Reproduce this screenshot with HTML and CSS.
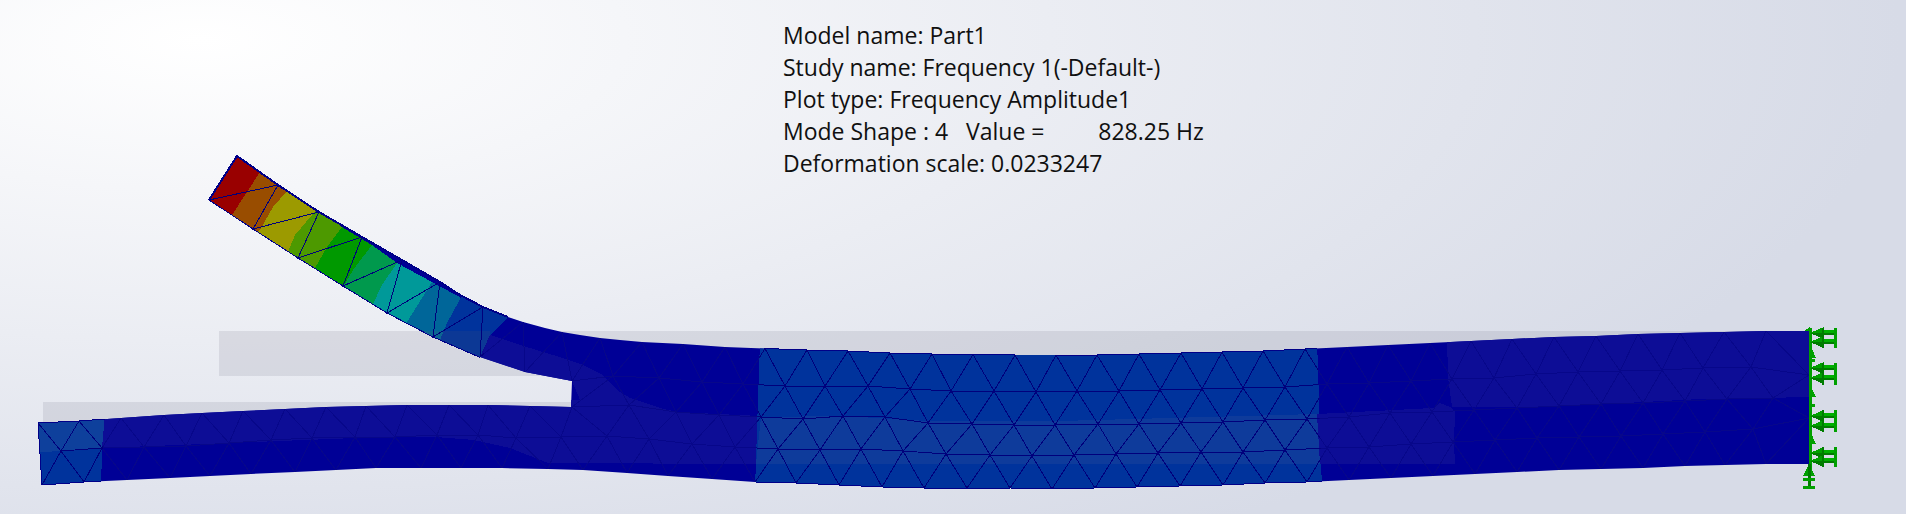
FILE: index.html
```html
<!DOCTYPE html>
<html lang="en">
<head>
<meta charset="utf-8">
<title>Frequency 1 - Mode Shape 4</title>
<link rel="stylesheet" href="styles.css">
</head>
<body>
<main class="viewport">
  <svg class="model" width="1906" height="514" viewBox="0 0 1906 514" aria-label="Deformed part, mode shape 4">
    <defs>
      <clipPath id="part">
        <path d="M237 156L278 185 319 212 362 237 402 260 440 282 460 295 483 307 508 317 523 322 545 328 562 332 580 335 600 338 620 340 642 342 683 344 725 347 765 348.5 807 350 848 351 890 353 932 354 973 354.5 1015 355 1056 355 1097 355 1139 354 1181 353 1222 352 1263 351 1305 349 1347 347 1388 345 1430 343 1471 341 1512 339 1554 337 1596 336 1638 334 1680 333 1724 332 1766 331 1809 331 1809 464 1766 464 1725 465 1685 466 1643 468 1601 469 1559 470 1517 472 1475 474 1433 476 1391 478 1349 480 1307 482 1265 483 1223 485 1180 486 1137 487 1095 488 1052 489 1010 488 967 488 924 488 882 487 839 485 796 483 755 482 712 479 668 476 627 473 583 470 548 469 502 468 461 468 421 468 376 468 336 470 295 472 251 474 210 476 170 478 127 480 84 482 42 485 38 423 79 421 121 418 164 415 202 413 243 411 285 409 326 407 366 406 407 405 449 405 488 405 530 406 571 407 572 381 525 372 480 357 440 340 387 313 343 286 298 258 253 229 209 200Z"/>
      </clipPath>
      <clipPath id="bright-zones">
        <rect x="30" y="410" width="73" height="80"/>
        <polygon points="190,140 515,310 490,335 480,365 190,240"/>
        <polygon points="760,340 1317,340 1322,495 755,495"/>
      </clipPath>
      <g id="fixture-arrow">
        <polygon class="fix-bright" points="1810,0 1824,-6 1824,0"/>
        <polygon class="fix-dark" points="1810,0 1824,0 1824,6"/>
        <rect class="fix-light" x="1824" y="-3" width="12" height="3"/>
        <rect class="fix-dark" x="1824" y="0" width="12" height="2"/>
      </g>
      <g id="mesh-lines">
        <polyline points="209,200 278,185 253,229 319,212 298,258 362,237 343,286 402,260 387,313 440,282 433,337 483,307 480,357 523,322 525,372 562,332 572,381 600,338 613,376"/>
        <polyline points="572,381 613,376 659,378 702,382 743,384 785,386 825,386 868,386 910,389 951,391 994,391 1036,392 1077,391 1119,391 1160,390 1202,389 1243,388 1285,387 1327,384 1369,383 1411,381 1452,379 1494,378 1536,374 1578,372 1620,371 1662,370 1703,368 1751,367 1809,375"/>
        <polyline points="572,407 629,405 676,412 719,415 761,417 803,419 843,416 885,417 928,423 972,424 1014,425 1055,425 1098,424 1139,424 1181,423 1223,422 1265,420 1307,419 1349,417 1390,413 1432,412 1474,410 1517,408 1559,406 1601,404 1643,403 1685,401 1727,399 1773,398 1809,418"/>
        <polyline points="61,451 102,448 144,447 186,446 229,443 271,440 312,438 355,437 395,437 437,435 478,435 516,438 561,437 607,436 649,439 692,444 735,447 778,449 820,450 861,449 903,451 946,454 990,455 1032,456 1074,455 1116,454 1158,453 1201,452 1243,452 1285,450 1327,448 1369,447 1411,444 1453,442 1495,440 1537,438 1579,437 1621,436 1663,434 1705,432 1753,429 1809,418"/>
        <polyline points="600,338 613,376 642,342 659,378 683,344 702,382 725,347 743,384 765,348.5 785,386 807,350 825,386 848,351 868,386 890,353 910,389 932,354 951,391 973,354.5 994,391 1015,355 1036,392 1056,355 1077,391 1097,355 1119,391 1139,354 1160,390 1181,353 1202,389 1222,352 1243,388 1263,351 1285,387 1305,349 1327,384 1347,347 1369,383 1388,345 1411,381 1430,343 1452,379 1471,341 1494,378 1512,339 1536,374 1554,337 1578,372 1596,336 1620,371 1638,334 1662,370 1680,333 1703,368 1724,332 1751,367 1766,331 1809,375"/>
        <polyline points="572,407 613,376 629,405 659,378 676,412 702,382 719,415 743,384 761,417 785,386 803,419 825,386 843,416 868,386 885,417 910,389 928,423 951,391 972,424 994,391 1014,425 1036,392 1055,425 1077,391 1098,424 1119,391 1139,424 1160,390 1181,423 1202,389 1223,422 1243,388 1265,420 1285,387 1307,419 1327,384 1349,417 1369,383 1390,413 1411,381 1432,412 1452,379 1474,410 1494,378 1517,408 1536,374 1559,406 1578,372 1601,404 1620,371 1643,403 1662,370 1685,401 1703,368 1727,399 1751,367 1773,398 1809,375"/>
        <polyline points="561,437 572,407 607,436 629,405 649,439 676,412 692,444 719,415 735,447 761,417 778,449 803,419 820,450 843,416 861,449 885,417 903,451 928,423 946,454 972,424 990,455 1014,425 1032,456 1055,425 1074,455 1098,424 1116,454 1139,424 1158,453 1181,423 1201,452 1223,422 1243,452 1265,420 1285,450 1307,419 1327,448 1349,417 1369,447 1390,413 1411,444 1432,412 1453,442 1474,410 1495,440 1517,408 1537,438 1559,406 1579,437 1601,404 1621,436 1643,403 1663,434 1685,401 1705,432 1727,399 1753,429 1773,398 1809,418"/>
        <polyline points="561,437 583,470 607,436 627,473 649,439 668,476 692,444 712,479 735,447 755,482 778,449 796,483 820,450 839,485 861,449 882,487 903,451 924,488 946,454 967,488 990,455 1010,488 1032,456 1052,489 1074,455 1095,488 1116,454 1137,487 1158,453 1180,486 1201,452 1223,485 1243,452 1265,483 1285,450 1307,482 1327,448 1349,480 1369,447 1391,478 1411,444 1433,476 1453,442 1475,474 1495,440 1517,472 1537,438 1559,470 1579,437 1601,469 1621,436 1643,468 1663,434 1685,466 1705,432 1725,465 1753,429 1766,464 1809,418"/>
        <polyline points="38,423 61,451 79,421 102,448 121,418 144,447 164,415 186,446 202,413 229,443 243,411 271,440 285,409 312,438 326,407 355,437 366,406 395,437 407,405 437,435 449,405 478,435 488,405 516,438 530,406 561,437 572,407"/>
        <polyline points="42,485 61,451 84,482 102,448 127,480 144,447 170,478 186,446 210,476 229,443 251,474 271,440 295,472 312,438 336,470 355,437 376,468 395,437 421,468 437,435 461,468 478,435 502,468 516,438 548,469 561,437 583,470"/>
      </g>
    </defs>

    <rect class="ghost" x="219" y="331" width="1590" height="45"/>
    <rect class="ghost" x="43" y="402" width="528" height="62"/>

    <g clip-path="url(#part)">
      <rect class="c-dark" x="0" y="100" width="1906" height="414"/>
      <polygon class="c-red" points="200,130 270,172 247,192 232,215 190,230"/>
      <polygon class="c-orange" points="260,172 288,190 273,207 260,230 265,250 215,230 232,215 247,192"/>
      <polygon class="c-yellow" points="288,190 318,208 295,235 288,252 290,275 245,240 260,230 273,207"/>
      <polygon class="c-olive" points="318,208 342,227 327,247 315,268 320,290 270,260 288,252 295,235"/>
      <polygon class="c-green" points="342,227 372,245 353,270 343,287 345,310 300,280 315,268 327,247"/>
      <polygon class="c-seagreen" points="372,245 397,263 382,285 373,304 375,330 330,300 343,287 353,270"/>
      <polygon class="c-teal" points="397,263 432,282 407,322 410,345 360,320 373,304 382,285"/>
      <polygon class="c-steel" points="432,282 465,300 447,323 440,340 445,360 395,340 407,322"/>
      <polygon class="c-mid" points="465,290 515,310 508,317 490,335 480,357 480,375 430,350 440,340 447,323"/>
      <rect class="overlay-arm" x="390" y="331" width="100" height="45"/>
      <polygon class="c-dark-lit" points="490,335 520,345 563,358 583,365 603,375 617,390 630,398 660,408 677,412 760,416 757,464 548,463 510,448 474,440 435,437 356,438 229,443 102,448 105,410 580,400 572,381 525,375 480,360"/>
      <polygon class="c-mid" points="760,340 1317,340 1322,490 755,490"/>
      <polygon class="c-mid-lit" points="761,417 843,416 927,421 1060,421 1317,414 1320,464 756,464"/>
      <polygon class="c-dark-lit" points="1317,414 1433,408 1440,403 1450,407 1455,412 1454,443 1455,464 1320,464"/>
      <polygon class="c-dark-lit" points="1447,335 1815,325 1815,397 1700,399 1550,407 1452,407 1448,377"/>
      <polygon class="c-tip-lit" points="30,415 105,415 102,448 30,453"/>
      <polygon class="c-mid" points="30,453 102,448 101,490 30,490"/>
    </g>

    <use class="mesh-faint" href="#mesh-lines"/>
    <g clip-path="url(#bright-zones)">
      <use class="mesh-strong" href="#mesh-lines"/>
    </g>

    <polyline class="edge-heavy" points="209,200 237,156 278,185 319,212 362,237 402,260 440,282 460,295 483,307 508,317"/>
    <polyline class="edge" points="209,200 253,229 298,258 343,286 387,313 433,337 479,357"/>
    <polyline class="edge" points="765,348.5 807,350 848,351 890,353 932,354 973,354.5 1015,355 1056,355 1097,355 1139,354 1181,353 1222,352 1263,351 1305,349 1317,348"/>
    <polyline class="edge" points="755,482 796,483 839,485 882,487 924,488 967,488 1010,488 1052,489 1095,488 1137,487 1180,486 1223,485 1265,483 1307,482 1322,481"/>
    <polyline class="edge" points="105,419 79,421 38,423 42,485 84,482 101,481"/>

    <g class="fixtures">
      <rect class="fix-bright" x="1809" y="328" width="3" height="144"/>
      <polygon class="fix-bright" points="1804,331 1810,327 1812,331"/>
      <use href="#fixture-arrow" y="333"/>
      <use href="#fixture-arrow" y="342"/>
      <use href="#fixture-arrow" y="368"/>
      <use href="#fixture-arrow" y="378"/>
      <use href="#fixture-arrow" y="416"/>
      <use href="#fixture-arrow" y="426"/>
      <use href="#fixture-arrow" y="453"/>
      <use href="#fixture-arrow" y="461"/>
      <rect class="fix-bright" x="1834" y="328" width="3" height="20"/>
      <rect class="fix-bright" x="1834" y="363" width="3" height="22"/>
      <rect class="fix-bright" x="1834" y="410" width="3" height="22"/>
      <rect class="fix-bright" x="1834" y="447" width="3" height="20"/>
      <rect class="fix-dark" x="1822" y="328" width="2" height="20"/>
      <rect class="fix-dark" x="1822" y="363" width="2" height="22"/>
      <rect class="fix-dark" x="1822" y="410" width="2" height="22"/>
      <rect class="fix-dark" x="1822" y="447" width="2" height="20"/>
      <polygon class="fix-bright" points="1810,344 1816,358 1810,358"/>
      <rect class="fix-bright" x="1810" y="359" width="5" height="3"/>
      <polygon class="fix-bright" points="1810,385 1816,397 1810,397"/>
      <rect class="fix-bright" x="1810" y="404" width="5" height="3"/>
      <polygon class="fix-bright" points="1810,431 1816,444 1810,444"/>
      <polygon class="fix-bright" points="1809,464 1815,476 1803,476"/>
      <rect class="fix-dark" x="1808" y="464" width="3" height="24"/>
      <rect class="fix-bright" x="1803" y="478" width="12" height="3"/>
      <rect class="fix-bright" x="1803" y="486" width="12" height="3"/>
    </g>
  </svg>

  <section class="info">
    <p>Model name: Part1</p>
    <p>Study name: Frequency 1(-Default-)</p>
    <p>Plot type: Frequency Amplitude1</p>
    <p>Mode Shape : 4   Value =         828.25 Hz</p>
    <p>Deformation scale: 0.0233247</p>
  </section>
</main>
</body>
</html>
```
FILE: styles.css
```css
html, body {
  margin: 0;
  padding: 0;
}

.viewport {
  position: relative;
  width: 1906px;
  height: 514px;
  overflow: hidden;
  background: radial-gradient(ellipse 1700px 600px at 200px 40px, #ffffff 0%, #d7dbe7 100%);
}

.model {
  position: absolute;
  left: 0;
  top: 0;
  shape-rendering: crispEdges;
}

.info {
  position: relative;
  padding: 19px 0 0 783px;
  font-family: "Open Sans", "Noto Sans", sans-serif;
  font-size: 23px;
  line-height: 32px;
  color: #101010;
}

.info p {
  margin: 0;
  white-space: pre;
}

.ghost { fill: rgba(110, 110, 125, 0.15); }

.c-dark { fill: #000096; }
.c-dark-lit { fill: #0d0d96; }
.c-red { fill: #990000; }
.c-orange { fill: #994d00; }
.c-yellow { fill: #9c9a00; }
.c-olive { fill: #4d9900; }
.c-green { fill: #009900; }
.c-seagreen { fill: #00994d; }
.c-teal { fill: #009999; }
.c-steel { fill: #006699; }
.c-mid { fill: #00339c; }
.c-mid-lit { fill: #0e3b9b; }
.c-tip-lit { fill: #0e409c; }
.overlay-arm { fill: rgba(100, 100, 100, 0.12); }

.mesh-faint {
  fill: none;
  stroke: #07078a;
  stroke-width: 1;
}

.mesh-strong {
  fill: none;
  stroke: #00007c;
  stroke-width: 1;
}

.edge {
  fill: none;
  stroke: #000088;
  stroke-width: 1;
}

.edge-heavy {
  fill: none;
  stroke: #000088;
  stroke-width: 2;
}

.fix-light { fill: #00b000; }
.fix-bright { fill: #00a000; }
.fix-dark { fill: #007c00; }
```
